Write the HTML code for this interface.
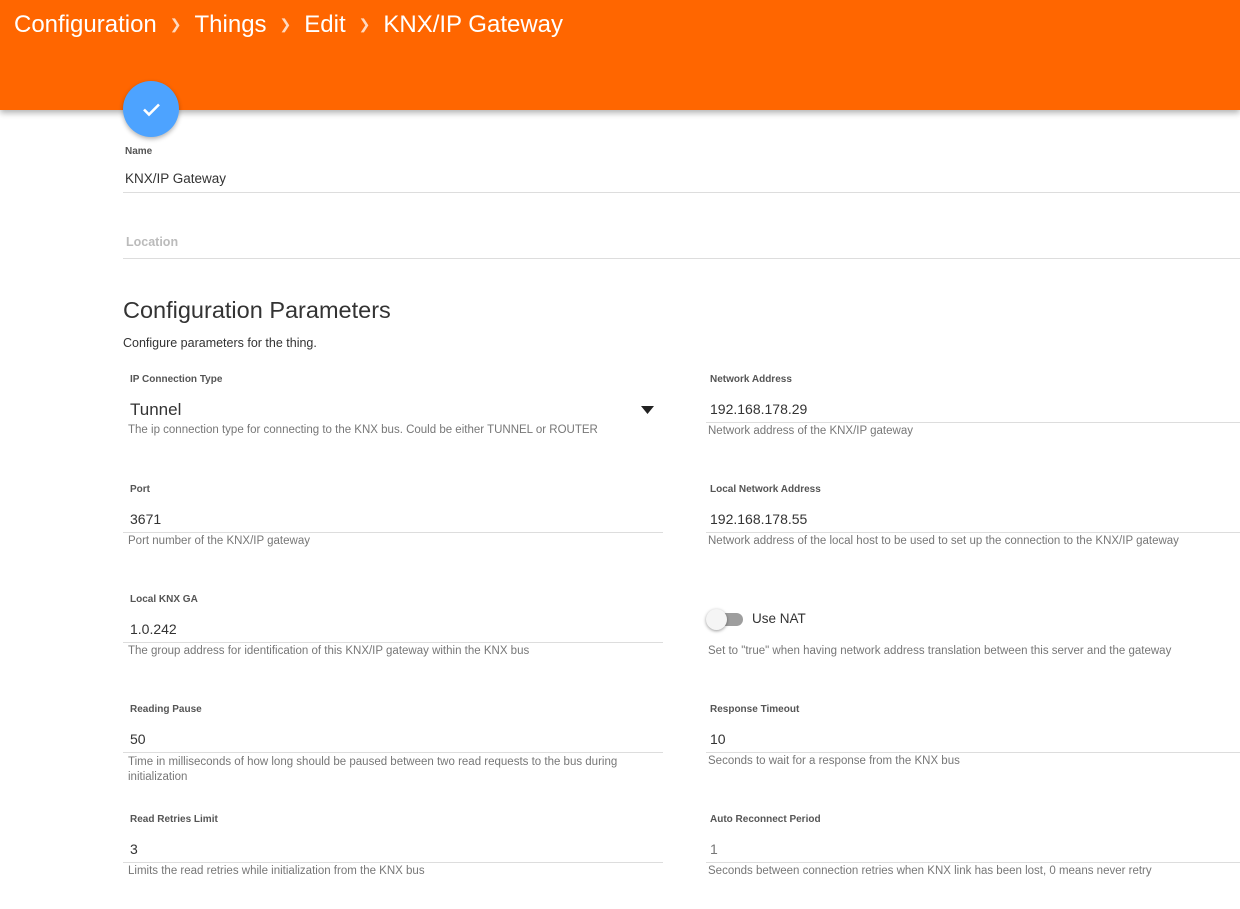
<!DOCTYPE html>
<html><head><meta charset="utf-8"><style>
*{margin:0;padding:0;box-sizing:border-box}
body{width:1240px;height:909px;overflow:hidden;background:#fff;font-family:"Liberation Sans",sans-serif;position:relative}
.hd{position:absolute;left:0;top:0;width:1240px;height:110px;background:#ff6600;box-shadow:0 3px 6px rgba(0,0,0,.3)}
.a{position:absolute;white-space:nowrap;line-height:1}
.ttl{top:13px;left:14px;color:#fff;font-size:24px}
.ttl .s{color:#ffd9bf;font-size:14px;margin:0 13px;position:relative;top:-3px}
.fab{position:absolute;left:123px;top:81px;width:56px;height:56px;border-radius:50%;background:#4da3ff;box-shadow:0 2px 5px rgba(0,0,0,.3)}
.lb{font-size:10px;font-weight:bold;color:#555}
.v{font-size:14px;color:#333}
.h{font-size:11.5px;color:#777}
.ln{position:absolute;height:1px;background:#ddd}
</style></head><body>
<div class="hd"></div>
<div class="a ttl">Configuration<span class="s">&#10095;</span>Things<span class="s">&#10095;</span>Edit<span class="s">&#10095;</span>KNX/IP Gateway</div>
<div class="fab"><svg width="56" height="56" viewBox="0 0 56 56"><path d="M21 28.5l5 5 10-10" fill="none" stroke="#fff" stroke-width="2.6"/></svg></div>

<div class="a lb" style="left:125px;top:147px">Name</div>
<div class="a v" style="left:125px;top:172px;font-size:13.5px">KNX/IP Gateway</div>
<div class="ln" style="left:123px;top:192px;width:1117px"></div>
<div class="a" style="left:126px;top:236px;font-size:12.5px;font-weight:bold;color:#bbb">Location</div>
<div class="ln" style="left:123px;top:258px;width:1117px"></div>

<div class="a" style="left:123px;top:299px;font-size:23.5px;color:#333">Configuration Parameters</div>
<div class="a" style="left:123px;top:337px;font-size:12.5px;color:#333">Configure parameters for the thing.</div>

<!-- row 1 -->
<div class="a lb" style="left:130px;top:375px">IP Connection Type</div>
<div class="a" style="left:130px;top:401px;font-size:17px;color:#333">Tunnel</div>
<svg class="a" style="left:641px;top:406px" width="14" height="8"><path d="M0 0h13l-6.5 8z" fill="#222"/></svg>
<div class="a h" style="left:128px;top:425px">The ip connection type for connecting to the KNX bus. Could be either TUNNEL or ROUTER</div>
<div class="a lb" style="left:710px;top:375px">Network Address</div>
<div class="a v" style="left:710px;top:402px">192.168.178.29</div>
<div class="ln" style="left:706px;top:422px;width:534px"></div>
<div class="a h" style="left:708px;top:426px">Network address of the KNX/IP gateway</div>

<!-- row 2 -->
<div class="a lb" style="left:130px;top:485px">Port</div>
<div class="a v" style="left:130px;top:512px">3671</div>
<div class="ln" style="left:123px;top:532px;width:540px"></div>
<div class="a h" style="left:128px;top:536px">Port number of the KNX/IP gateway</div>
<div class="a lb" style="left:710px;top:485px">Local Network Address</div>
<div class="a v" style="left:710px;top:512px">192.168.178.55</div>
<div class="ln" style="left:706px;top:532px;width:534px"></div>
<div class="a h" style="left:708px;top:536px">Network address of the local host to be used to set up the connection to the KNX/IP gateway</div>

<!-- row 3 -->
<div class="a lb" style="left:130px;top:595px">Local KNX GA</div>
<div class="a v" style="left:130px;top:622px">1.0.242</div>
<div class="ln" style="left:123px;top:642px;width:540px"></div>
<div class="a h" style="left:128px;top:646px">The group address for identification of this KNX/IP gateway within the KNX bus</div>
<div style="position:absolute;left:711px;top:613px;width:32px;height:13px;border-radius:7px;background:#9e9e9e"></div>
<div style="position:absolute;left:706px;top:609px;width:21px;height:21px;border-radius:50%;background:#f5f5f5;box-shadow:0 1px 3px rgba(0,0,0,.4)"></div>
<div class="a" style="left:752px;top:612px;font-size:13.5px;color:#333">Use NAT</div>
<div class="a h" style="left:708px;top:646px">Set to "true" when having network address translation between this server and the gateway</div>

<!-- row 4 -->
<div class="a lb" style="left:130px;top:705px">Reading Pause</div>
<div class="a v" style="left:130px;top:732px">50</div>
<div class="ln" style="left:123px;top:752px;width:540px"></div>
<div class="a h" style="left:128px;top:755px;line-height:15px;white-space:normal;width:520px">Time in milliseconds of how long should be paused between two read requests to the bus during initialization</div>
<div class="a lb" style="left:710px;top:705px">Response Timeout</div>
<div class="a v" style="left:710px;top:732px">10</div>
<div class="ln" style="left:706px;top:752px;width:534px"></div>
<div class="a h" style="left:708px;top:756px">Seconds to wait for a response from the KNX bus</div>

<!-- row 5 -->
<div class="a lb" style="left:130px;top:815px">Read Retries Limit</div>
<div class="a v" style="left:130px;top:842px">3</div>
<div class="ln" style="left:123px;top:862px;width:540px"></div>
<div class="a h" style="left:128px;top:866px">Limits the read retries while initialization from the KNX bus</div>
<div class="a lb" style="left:710px;top:815px">Auto Reconnect Period</div>
<div class="a v" style="left:710px;top:842px;color:#777">1</div>
<div class="ln" style="left:706px;top:862px;width:534px"></div>
<div class="a h" style="left:708px;top:866px">Seconds between connection retries when KNX link has been lost, 0 means never retry</div>
</body></html>
